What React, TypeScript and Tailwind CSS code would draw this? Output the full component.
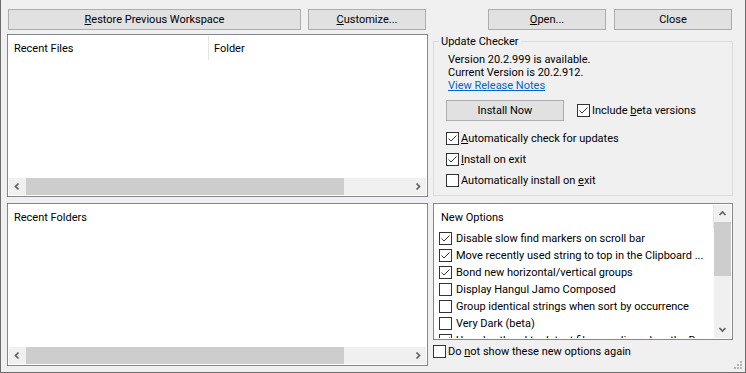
import React from 'react';

type Kids = { children?: React.ReactNode };

const U = ({ children }: Kids) => <span className="underline">{children}</span>;

const Btn = ({ children, w }: Kids & { w: string }) => (
  <div className={`flex h-[21px] shrink-0 items-center justify-center border border-[#adadad] bg-[#e1e1e1] ${w}`}>
    {children}
  </div>
);

const Check = ({ on }: { on?: boolean }) => (
  <span className="flex h-[13px] w-[13px] shrink-0 items-center justify-center border border-[#333333] bg-white">
    {on && (
      <svg width="11" height="11" viewBox="0 0 11 11">
        <path d="M1.5 5.5L4 8L9.5 2.5" fill="none" stroke="#333333" strokeWidth="1" />
      </svg>
    )}
  </span>
);

const Arrow = ({ dir }: { dir: 'l' | 'r' | 'u' | 'd' }) => {
  const d = {
    l: 'M5.5 1.5L2.5 4.5L5.5 7.5',
    r: 'M3.5 1.5L6.5 4.5L3.5 7.5',
    u: 'M1.5 6L4.5 3L7.5 6',
    d: 'M1.5 3L4.5 6L7.5 3',
  }[dir];
  return (
    <svg width="9" height="9" viewBox="0 0 9 9">
      <path d={d} fill="none" stroke="#606060" strokeWidth="1.7" />
    </svg>
  );
};

const HScroll = () => (
  <div className="flex h-[17px] shrink-0 bg-[#f0f0f0]">
    <div className="flex w-[17px] items-center justify-center">
      <Arrow dir="l" />
    </div>
    <div className="flex flex-1">
      <div className="w-[318px] bg-[#cdcdcd]" />
    </div>
    <div className="flex w-[17px] items-center justify-center">
      <Arrow dir="r" />
    </div>
  </div>
);

const ListBox = ({ children }: Kids) => (
  <div className="flex h-[163px] flex-col border border-[#828790] bg-white p-px">
    {children}
    <div className="flex-1" />
    <HScroll />
  </div>
);

const Row = ({ on, children, gap }: Kids & { on?: boolean; gap: string }) => (
  <div className={`flex h-[17px] items-center ${gap}`}>
    <Check on={on} />
    <span className="whitespace-nowrap">{children}</span>
  </div>
);

const newOptions: [boolean, string][] = [
  [true, 'Disable slow find markers on scroll bar'],
  [true, 'Move recently used string to top in the Clipboard ...'],
  [true, 'Bond new horizontal/vertical groups'],
  [false, 'Display Hangul Jamo Composed'],
  [false, 'Group identical strings when sort by occurrence'],
  [false, 'Very Dark (beta)'],
  [true, 'Use shorthand to detect file encoding when the Document'],
];

export default function App() {
  return (
    <div className="relative flex h-[373px] w-[746px] gap-[5px] border-x border-b border-[#6b6b6b] bg-[#f0f0f0] pl-[6px] pt-[9px] font-['Roboto','Segoe_UI',sans-serif] text-[11px] leading-[13px] text-black">
      {/* left column */}
      <div className="flex w-[421px] flex-col">
        <div className="flex gap-[7px] pl-px">
          <Btn w="w-[293px]">
            <span>
              <U>R</U>estore Previous Workspace
            </span>
          </Btn>
          <Btn w="w-[118px]">
            <span>
              <U>C</U>ustomize...
            </span>
          </Btn>
        </div>

        <div className="mt-[4px]">
          <ListBox>
            <div className="flex h-[24px] shrink-0 items-center">
              <div className="w-[199px] pl-[5px]">Recent Files</div>
              <div className="h-full w-px bg-[#e5e5e5]" />
              <div className="pl-[5px]">Folder</div>
            </div>
          </ListBox>
        </div>

        <div className="mt-[6px]">
          <ListBox>
            <div className="flex h-[24px] shrink-0 items-center pl-[5px]">Recent Folders</div>
          </ListBox>
        </div>
      </div>

      {/* right column */}
      <div className="flex w-[300px] flex-col">
        <div className="flex justify-end gap-[8px] pr-px">
          <Btn w="w-[118px]">
            <span>
              <U>O</U>pen...
            </span>
          </Btn>
          <Btn w="w-[118px]">Close</Btn>
        </div>

        <fieldset className="mt-[5px] border border-[#dcdcdc]">
          <legend className="ml-[5px] px-[2px] leading-[13px]">Update Checker</legend>
          <div className="flex flex-col pb-[6px] pl-[12px] pt-[5px]">
            <div className="pl-[2px]">Version 20.2.999 is available.</div>
            <div className="pl-[2px]">Current Version is 20.2.912.</div>
            <div className="pl-[2px] text-[#0066cc] underline">View Release Notes</div>
            <div className="mt-[8px] flex items-center">
              <Btn w="w-[118px]">Install Now</Btn>
              <div className="ml-[13px] flex items-center gap-[2px]">
                <Check on />
                <span>
                  Include <U>b</U>eta versions
                </span>
              </div>
            </div>
            <div className="mt-[9px] flex flex-col gap-[4px]">
              <Row on gap="gap-[2px]">
                <U>A</U>utomatically check for updates
              </Row>
              <Row on gap="gap-[2px]">
                <U>I</U>nstall on exit
              </Row>
              <Row gap="gap-[2px]">
                Automatically install on <U>e</U>xit
              </Row>
            </div>
          </div>
        </fieldset>

        <div className="mt-[7px] flex h-[137px] border border-[#828790] bg-white p-px">
          <div className="flex flex-1 flex-col overflow-hidden">
            <div className="flex h-[24px] shrink-0 items-center border-r border-[#e5e5e5] pl-[6px]">
              New Options
            </div>
            <div className="mt-px flex flex-col pl-[4px]">
              {newOptions.map(([on, label]) => (
                <Row key={label} on={on} gap="gap-[4px]">
                  {label}
                </Row>
              ))}
            </div>
          </div>
          <div className="flex w-[17px] shrink-0 flex-col bg-[#f0f0f0]">
            <div className="flex h-[17px] items-center justify-center">
              <Arrow dir="u" />
            </div>
            <div className="h-[54px] bg-[#cdcdcd]" />
            <div className="flex-1" />
            <div className="flex h-[17px] items-center justify-center">
              <Arrow dir="d" />
            </div>
          </div>
        </div>

        <div className="mt-[3px]">
          <Row gap="gap-[2px]">
            Do <U>n</U>ot show these new options again
          </Row>
        </div>
      </div>

      {/* size grip */}
      <svg className="absolute bottom-[2px] right-[2px]" width="9" height="9" viewBox="0 0 9 9">
        <g fill="#b4b4b4">
          <rect x="6" y="0" width="2" height="2" />
          <rect x="3" y="3" width="2" height="2" />
          <rect x="6" y="3" width="2" height="2" />
          <rect x="0" y="6" width="2" height="2" />
          <rect x="3" y="6" width="2" height="2" />
          <rect x="6" y="6" width="2" height="2" />
        </g>
      </svg>
    </div>
  );
}
